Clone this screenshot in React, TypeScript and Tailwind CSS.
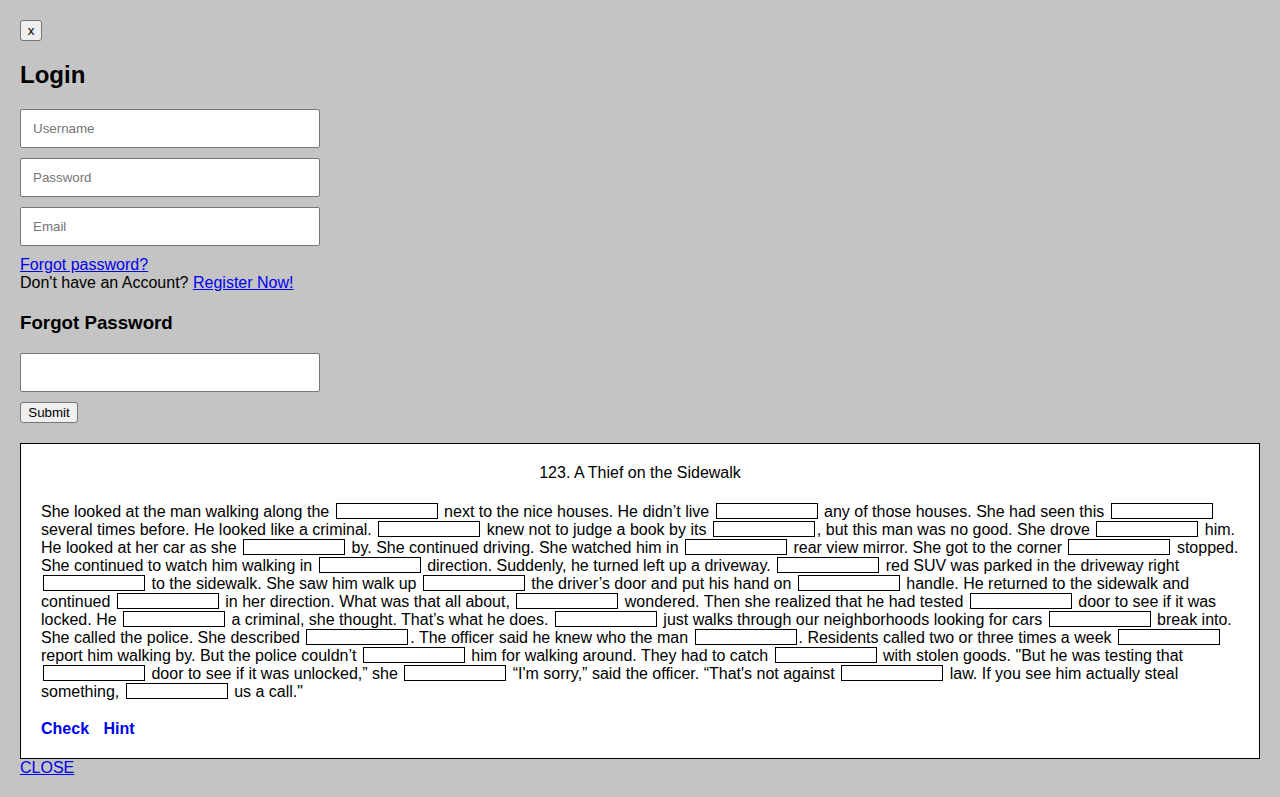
import React from "react";

const STORY =
  "She looked at the man walking along the ___ next to the nice houses. He didn’t live ___ any of those houses. She had seen this ___ several times before. He looked like a criminal. ___ knew not to judge a book by its ___, but this man was no good. She drove ___ him. He looked at her car as she ___ by. She continued driving. She watched him in ___ rear view mirror. She got to the corner ___ stopped. She continued to watch him walking in ___ direction. Suddenly, he turned left up a driveway. ___ red SUV was parked in the driveway right ___ to the sidewalk. She saw him walk up ___ the driver’s door and put his hand on ___ handle. He returned to the sidewalk and continued ___ in her direction. What was that all about, ___ wondered. Then she realized that he had tested ___ door to see if it was locked. He ___ a criminal, she thought. That’s what he does. ___ just walks through our neighborhoods looking for cars ___ break into. She called the police. She described ___. The officer said he knew who the man ___. Residents called two or three times a week ___ report him walking by. But the police couldn’t ___ him for walking around. They had to catch ___ with stolen goods. \"But he was testing that ___ door to see if it was unlocked,” she ___ “I'm sorry,” said the officer. “That's not against ___ law. If you see him actually steal something, ___ us a call.\"";

function Blank() {
  return (
    <input
      type="text"
      className="mx-[2px] w-[102px] h-[16px] p-0 border border-black bg-white text-[13.33px] leading-[normal] align-baseline -translate-y-[2px] outline-none"
    />
  );
}

export default function App() {
  const parts = STORY.split("___");
  return (
    <div className="min-h-screen bg-[#c4c4c4] p-[20px] font-['Liberation_Sans',Arial,sans-serif] text-[16px] leading-[normal] text-black">
      <div className="flex flex-col items-start">
        <button className="w-[22px] h-[21px] p-0 bg-[#efefef] border border-[#767676] rounded-[3px] text-[13.33px] leading-[normal] text-black text-center">
          x
        </button>
        <h2 className="mt-[20px] mb-[20px] text-[24px] font-bold leading-[normal]">Login</h2>
        <div className="flex flex-col gap-[10px]">
          <input
            type="text"
            placeholder="Username"
            className="w-[300px] h-[39px] px-[12px] bg-white border border-[#767676] rounded-[2px] text-[13.33px] placeholder:text-[#757575] outline-none"
          />
          <input
            type="password"
            placeholder="Password"
            className="w-[300px] h-[39px] px-[12px] bg-white border border-[#767676] rounded-[2px] text-[13.33px] placeholder:text-[#757575] outline-none"
          />
          <input
            type="email"
            placeholder="Email"
            className="w-[300px] h-[39px] px-[12px] bg-white border border-[#767676] rounded-[2px] text-[13.33px] placeholder:text-[#757575] outline-none"
          />
        </div>
        <div className="mt-[10px]">
          <a href="#" className="block text-[#0000ee] underline">
            Forgot password?
          </a>
          <div>
            Don't have an Account?{" "}
            <a href="#" className="text-[#0000ee] underline">
              Register Now!
            </a>
          </div>
        </div>
        <h3 className="mt-[20px] mb-[19px] text-[18.72px] font-bold leading-[normal]">Forgot Password</h3>
        <input
          type="text"
          className="w-[300px] h-[39px] px-[12px] bg-white border border-[#767676] rounded-[2px] text-[13.33px] outline-none"
        />
        <button className="mt-[10px] w-[58px] h-[21px] p-0 bg-[#efefef] border border-[#767676] rounded-[3px] text-[13.33px] leading-[normal] text-black text-center">
          Submit
        </button>
      </div>

      <div className="mt-[20px] w-full border border-black bg-white p-[20px]">
        <div className="text-center mb-[21px]">123. A Thief on the Sidewalk</div>
        <p>
          {parts.map((p, i) => (
            <React.Fragment key={i}>
              {p}
              {i < parts.length - 1 && <Blank />}
            </React.Fragment>
          ))}
        </p>
        <div className="mt-[19px] flex gap-[14.5px] font-bold text-[#0000ee]">
          <a href="#">Check</a>
          <a href="#">Hint</a>
        </div>
      </div>
      <a href="#" className="text-[#0000ee] underline">
        CLOSE
      </a>
    </div>
  );
}
